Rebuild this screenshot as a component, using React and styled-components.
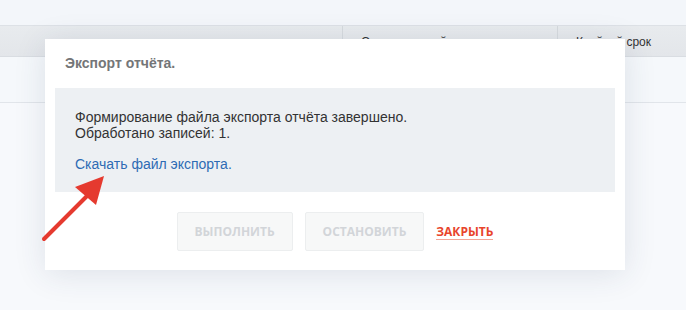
import { createGlobalStyle, styled } from "styled-components";

const GlobalStyle = createGlobalStyle`
    html, body {
        margin: 0;
        padding: 0;
        width: 686px;
        height: 310px;
        overflow: hidden;
        background: #f6f8fb;
        font-family: "Liberation Sans", Arial, sans-serif;
    }
`

export default function App(){
    return(
        <>
        <GlobalStyle/>
        <Page>
            <TopStrip/>
            <TableHead>
                <HeadCell></HeadCell>
                <HeadCell>Ответственный</HeadCell>
                <HeadCell>Крайний срок</HeadCell>
            </TableHead>
            <TableRow/>

            <Modal>
                <Title>Экспорт отчёта.</Title>
                <Message>
                    <p>Формирование файла экспорта отчёта завершено.<br/>Обработано записей: 1.</p>
                    <Link href="#">Скачать файл экспорта.</Link>
                </Message>
                <Actions>
                    <Button disabled>Выполнить</Button>
                    <Button disabled>Остановить</Button>
                    <CloseLink>Закрыть</CloseLink>
                </Actions>
            </Modal>

            <Arrow width="80" height="80" viewBox="0 0 80 80">
                <line x1="4" y1="69" x2="52" y2="21" stroke="#e53a2f" strokeWidth="4" strokeLinecap="round"/>
                <polygon points="64,6 35,17 56,35" fill="#e53a2f"/>
            </Arrow>
        </Page>
        </>
    )
}

const Page = styled.div`
    position: relative;
    width: 686px;
    height: 310px;
    background: #f7f9fc;
`

const TopStrip = styled.div`
    height: 25px;
    background: #f3f6fa;
`

const TableHead = styled.div`
    display: grid;
    grid-template-columns: 342px 215px 1fr;
    height: 30px;
    background: linear-gradient(#e8ebee, #e3e6ea);
    border-top: 1px solid #dde1e6;
    border-bottom: 1px solid #d9dde2;
`

const HeadCell = styled.div`
    padding: 9px 18px 0 18px;
    font-size: 12px;
    color: #333;
    & + & {
        border-left: 1px solid #d6dade;
    }
`

const TableRow = styled.div`
    height: 45px;
    background: #f5f8fb;
    border-bottom: 1px solid #e1e5ea;
`

const Modal = styled.div`
    position: absolute;
    left: 45px;
    top: 39px;
    width: 580px;
    height: 231px;
    box-sizing: border-box;
    background: #fff;
    padding: 0 10px;
    box-shadow: 0 4px 30px rgba(40, 60, 90, 0.12);
`

const Title = styled.div`
    height: 49px;
    padding-left: 10px;
    line-height: 49px;
    font-size: 14px;
    font-weight: 700;
    color: #747678;
`

const Message = styled.div`
    height: 104px;
    box-sizing: border-box;
    background: #edf0f3;
    padding: 21px 20px 0 20px;
    font-size: 14px;
    line-height: 16px;
    color: #333;
    p{
        margin: 0;
    }
`

const Link = styled.a`
    display: inline-block;
    margin-top: 15px;
    color: #2d6bb4;
    text-decoration: none;
`

const Actions = styled.div`
    display: flex;
    align-items: center;
    justify-content: center;
    gap: 12px;
    padding-top: 20px;
`

const Button = styled.button`
    height: 39px;
    padding: 0 17px;
    background: #f7f8f8;
    border: 1px solid #eceeef;
    border-radius: 2px;
    font-family: "Open Sans", sans-serif;
    font-size: 12px;
    font-weight: 700;
    text-transform: uppercase;
    color: #d2d5d9;
`

const CloseLink = styled.span`
    font-family: "Open Sans", sans-serif;
    font-size: 12px;
    font-weight: 700;
    text-transform: uppercase;
    color: #e8452c;
    border-bottom: 1px solid #f3a597;
    line-height: 15px;
`

const Arrow = styled.svg`
    position: absolute;
    left: 40px;
    top: 170px;
`
